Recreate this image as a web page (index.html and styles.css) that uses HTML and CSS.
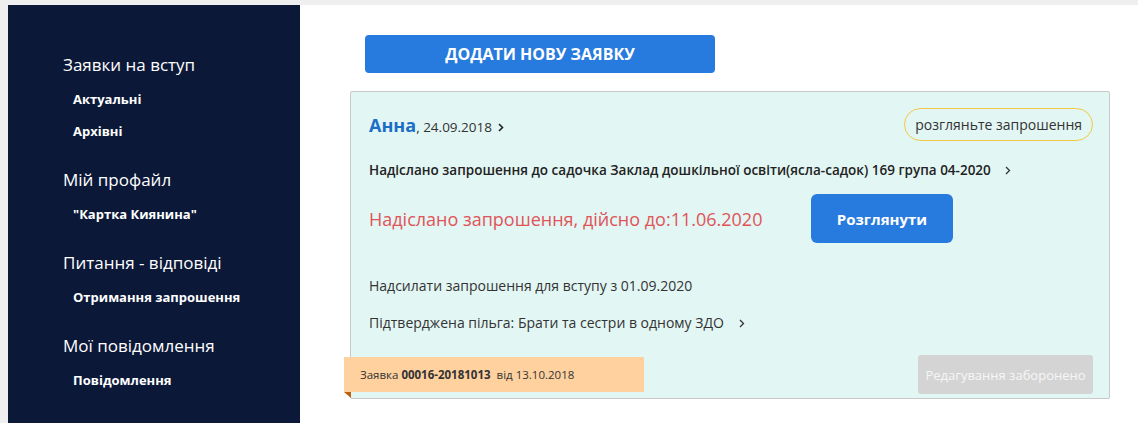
FILE: index.html
```html
<!DOCTYPE html>
<html lang="uk">
<head>
  <meta charset="UTF-8">
  <title>Заявки на вступ</title>
  <link rel="stylesheet" href="styles.css">
</head>
<body>
  <div class="page">
    <aside class="sidebar">
      <div class="group">
        <div class="group-title">Заявки на вступ</div>
        <a class="sub" href="#">Актуальні</a>
        <a class="sub" href="#">Архівні</a>
      </div>
      <div class="group">
        <div class="group-title">Мій профайл</div>
        <a class="sub" href="#">"Картка Киянина"</a>
      </div>
      <div class="group">
        <div class="group-title">Питання - відповіді</div>
        <a class="sub" href="#">Отримання запрошення</a>
      </div>
      <div class="group">
        <div class="group-title">Мої повідомлення</div>
        <a class="sub" href="#">Повідомлення</a>
      </div>
    </aside>

    <main class="main">
      <button class="add-btn">Додати нову заявку</button>

      <div class="card">
        <div class="card-head">
          <div class="who">
            <span class="name">Анна</span>, 24.09.2018
            <svg class="chev" width="6" height="9" viewBox="0 0 6 9"><path d="M1 1l3.5 3.5L1 8" fill="none" stroke="#222" stroke-width="1.6"/></svg>
          </div>
          <span class="badge">розгляньте запрошення</span>
        </div>

        <div class="inst">
          Надіслано запрошення до садочка Заклад дошкільної освіти(ясла-садок) 169 група 04-2020
          <svg class="chev far" width="6" height="9" viewBox="0 0 6 9"><path d="M1 1l3.5 3.5L1 8" fill="none" stroke="#333" stroke-width="1.3"/></svg>
        </div>

        <div class="action">
          <div class="status">Надіслано запрошення, дійсно до:11.06.2020</div>
          <button class="view-btn">Розглянути</button>
        </div>

        <div class="info first">Надсилати запрошення для вступу з 01.09.2020</div>
        <div class="info">
          Підтверджена пільга: Брати та сестри в одному ЗДО
          <svg class="chev far" width="6" height="9" viewBox="0 0 6 9"><path d="M1 1l3.5 3.5L1 8" fill="none" stroke="#333" stroke-width="1.3"/></svg>
        </div>

        <div class="card-foot">
          <div class="ribbon">Заявка <b>00016-20181013</b>&nbsp; від 13.10.2018</div>
          <button class="edit-btn">Редагування заборонено</button>
        </div>
      </div>
    </main>
  </div>
</body>
</html>
```

FILE: styles.css
```css
body { margin: 0; background: #efefef; font-family: "Open Sans", "Noto Sans", sans-serif; color: #333; }
.page { display: flex; padding: 5px 0 0 8px; height: 418px; }
button { font-family: inherit; border: none; cursor: pointer; }

.sidebar { width: 237px; background: #0b1838; padding: 48px 0 0 55px; color: #fff; }
.group { margin-top: 21px; }
.group:first-child { margin-top: 0; }
.group-title { font-size: 17px; line-height: 24px; margin-bottom: 6px; }
.sub { display: block; color: #fff; text-decoration: none; font-size: 13px; font-weight: 700; line-height: 32px; padding-left: 10px; }

.main { flex: 1; background: #fff; padding: 30px 28px 0 50px; }
.add-btn { display: block; margin-left: 15px; width: 350px; height: 38px; background: #277ade; color: #fff; font-size: 16px; font-weight: 700; text-transform: uppercase; border-radius: 4px; }

.card { margin-top: 18px; background: #e2f6f4; border: 1px solid #c8c8c8; border-radius: 2px; padding: 16px 16px 4px 18px; }
.card-head { display: flex; justify-content: space-between; align-items: center; height: 33px; }
.who { font-size: 13.5px; color: #333; }
.name { font-size: 18px; font-weight: 700; color: #1b6fc4; }
.chev { margin-left: 2px; }
.chev.far { margin-left: 11px; }
.badge { height: 31px; line-height: 31px; padding: 0 10px; border: 1px solid #f2c744; border-radius: 17px; font-size: 14px; color: #333; }

.inst { margin-top: 19px; font-size: 13.5px; line-height: 20px; font-weight: 600; color: #222; }
.action { margin-top: 14px; display: flex; align-items: center; height: 49px; }
.status { width: 442px; font-size: 18px; color: #e05458; }
.view-btn { width: 142px; height: 49px; background: #277ade; color: #fff; font-size: 15px; font-weight: 700; border-radius: 6px; }

.info { margin-top: 17px; font-size: 14px; line-height: 20px; color: #333; }
.info.first { margin-top: 33px; }

.card-foot { margin: 22px 0 0 -25px; display: flex; justify-content: space-between; align-items: center; }
.ribbon { position: relative; width: 284px; height: 35px; line-height: 35px; padding-left: 16px; background: #fed19f; font-size: 11.5px; color: #333; }
.ribbon::after { content: ""; position: absolute; left: 0; bottom: -6px; border-top: 6px solid #b8620f; border-left: 7px solid transparent; }
.edit-btn { width: 175px; height: 39px; background: #d4d4d4; color: #f6f6f6; font-size: 13px; border-radius: 3px; }
```
